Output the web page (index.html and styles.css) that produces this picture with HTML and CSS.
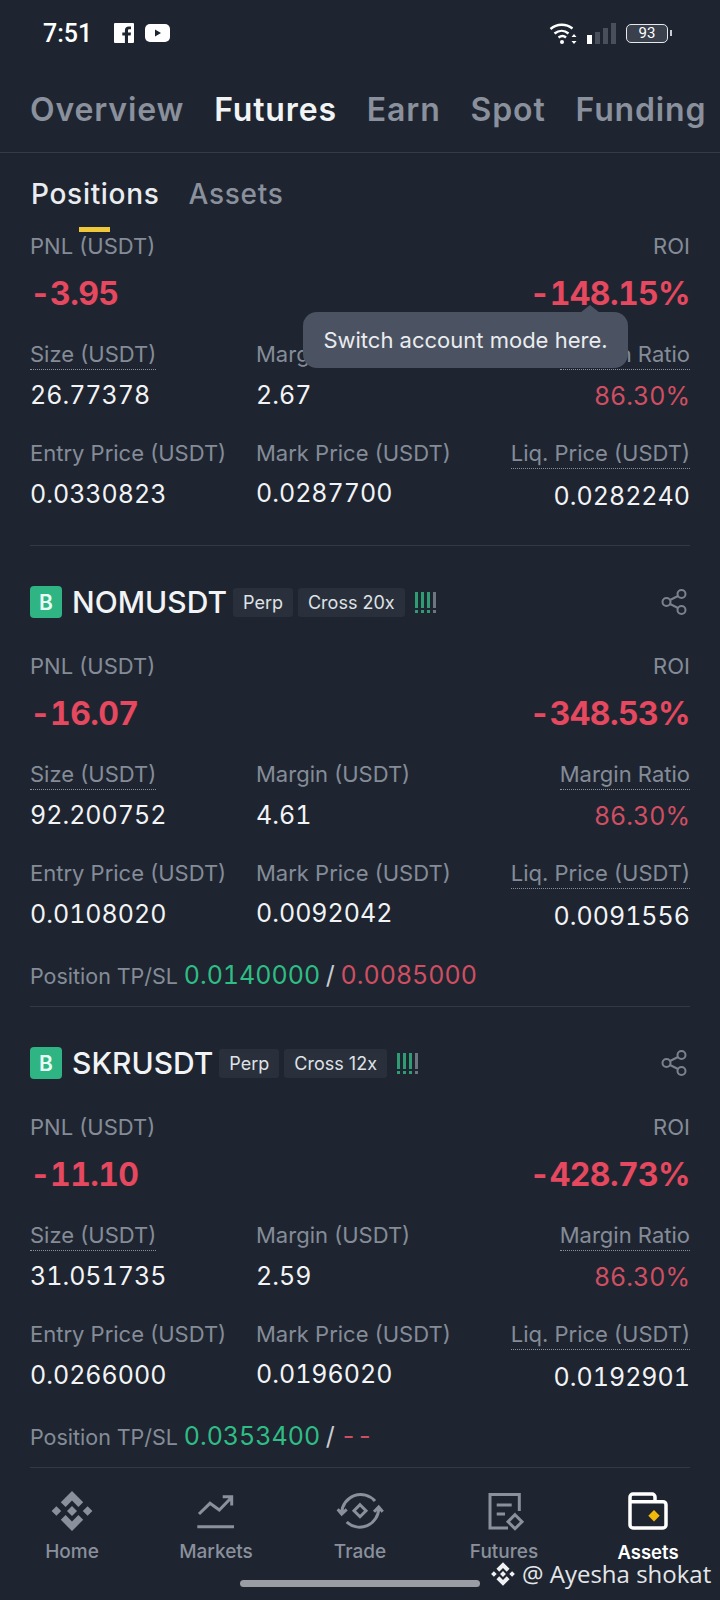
FILE: index.html
```html
<!DOCTYPE html>
<html lang="en">
<head>
  <meta charset="UTF-8">
  <meta name="viewport" content="width=device-width, initial-scale=1.0">
  <title>Assets - Futures</title>
  <link rel="stylesheet" href="styles.css">
</head>
<body>
  <svg class="defs" width="0" height="0">
    <symbol id="bnb" viewBox="0 0 24 24">
      <path d="M12 2l5.600 5.600-2.400 2.400L12 6.800 8.800 10 6.400 7.600zM12 22l5.600-5.600-2.400-2.400-3.200 3.200L8.800 14l-2.400 2.400zM12 9.500l2.500 2.500-2.500 2.500-2.500-2.500zM4.200 9.600L6.600 12l-2.400 2.400L1.800 12zM19.800 9.600l2.400 2.400-2.400 2.400-2.400-2.400z"/>
    </symbol>
    <symbol id="share" viewBox="0 0 26 26">
      <g fill="none" stroke="currentColor" stroke-width="2">
        <circle cx="5.500" cy="13" r="4"/><circle cx="20.500" cy="5" r="4"/><circle cx="20.500" cy="21" r="4"/>
        <path d="M9 11l8-4M9 15l8 4"/>
      </g>
    </symbol>
  </svg>

  <div class="status-bar">
    <span class="clock">7:51</span>
    <svg class="st-fb" viewBox="0 0 20 20"><path fill="#fff" d="M1 0h18a1 1 0 0 1 1 1v18a1 1 0 0 1-1 1h-5v-7.500h2.600l.4-3h-3V7.600c0-.9.300-1.400 1.500-1.400H17V3.500c-.3 0-1.200-.1-2.300-.1-2.300 0-3.800 1.400-3.800 3.900v2.200H8.300v3h2.600V20H1a1 1 0 0 1-1-1V1a1 1 0 0 1 1-1z"/></svg>
    <svg class="st-yt" viewBox="0 0 25 18"><rect width="25" height="18" rx="5" fill="#fff"/><path d="M10 5.500l6 3.500-6 3.500z" fill="#1e2530"/></svg>
    <div class="status-right">
      <svg class="st-wifi" viewBox="0 0 30 24" fill="none" stroke="#fff" stroke-width="2.400">
        <path d="M1.500 8C8 2.500 17 2.500 23.500 7.500M5.500 12.500c4.500-3.500 10-3.500 14 0M9.500 16.500c2.500-1.800 5.500-1.800 7.500 0"/>
        <circle cx="13" cy="21" r="2" fill="#fff" stroke="none"/>
        <path d="M25 13l2.500 3h-5zM25 23l-2.500-3h5z" fill="#fff" stroke="none"/>
      </svg>
      <div class="st-signal"><i class="on"></i><i></i><i></i><i></i></div>
      <div class="st-batt"><span>93</span></div>
    </div>
  </div>

  <nav class="top-tabs">
    <a>Overview</a>
    <a class="active">Futures</a>
    <a>Earn</a>
    <a>Spot</a>
    <a>Funding</a>
  </nav>

  <div class="sub-tabs">
    <a class="active">Positions</a>
    <a>Assets</a>
    <span class="indicator"></span>
  </div>

  <section class="position first">
    <div class="pnl-row">
      <div><div class="lbl">PNL (USDT)</div><div class="big red">-3.95</div></div>
      <div class="right"><div class="lbl">ROI</div><div class="big red">-148.15%</div></div>
    </div>
    <div class="stats">
      <div><div class="lbl dotted">Size (USDT)</div><div class="val">26.77378</div></div>
      <div><div class="lbl">Margin (USDT)</div><div class="val">2.67</div></div>
      <div class="right"><div class="lbl dotted">Margin Ratio</div><div class="val red-soft">86.30%</div></div>
      <div><div class="lbl">Entry Price (USDT)</div><div class="val">0.0330823</div></div>
      <div><div class="lbl">Mark Price (USDT)</div><div class="val mark">0.0287700</div></div>
      <div class="right"><div class="lbl dotted">Liq. Price (USDT)</div><div class="val liq">0.0282240</div></div>
    </div>
  </section>

  <section class="position">
    <div class="head">
      <span class="badge">B</span>
      <span class="symbol">NOMUSDT</span>
      <span class="tag">Perp</span>
      <span class="tag">Cross 20x</span>
      <span class="risk"><i></i><i></i><i></i><i></i></span>
      <svg class="share"><use href="#share"/></svg>
    </div>
    <div class="pnl-row">
      <div><div class="lbl">PNL (USDT)</div><div class="big red">-16.07</div></div>
      <div class="right"><div class="lbl">ROI</div><div class="big red">-348.53%</div></div>
    </div>
    <div class="stats">
      <div><div class="lbl dotted">Size (USDT)</div><div class="val">92.200752</div></div>
      <div><div class="lbl">Margin (USDT)</div><div class="val">4.61</div></div>
      <div class="right"><div class="lbl dotted">Margin Ratio</div><div class="val red-soft">86.30%</div></div>
      <div><div class="lbl">Entry Price (USDT)</div><div class="val">0.0108020</div></div>
      <div><div class="lbl">Mark Price (USDT)</div><div class="val mark">0.0092042</div></div>
      <div class="right"><div class="lbl dotted">Liq. Price (USDT)</div><div class="val liq">0.0091556</div></div>
    </div>
    <div class="tpsl"><span class="lbl">Position TP/SL</span> <span class="green">0.0140000</span> / <span class="red-soft">0.0085000</span></div>
  </section>

  <section class="position">
    <div class="head">
      <span class="badge">B</span>
      <span class="symbol">SKRUSDT</span>
      <span class="tag">Perp</span>
      <span class="tag">Cross 12x</span>
      <span class="risk"><i></i><i></i><i></i><i></i></span>
      <svg class="share"><use href="#share"/></svg>
    </div>
    <div class="pnl-row">
      <div><div class="lbl">PNL (USDT)</div><div class="big red">-11.10</div></div>
      <div class="right"><div class="lbl">ROI</div><div class="big red">-428.73%</div></div>
    </div>
    <div class="stats">
      <div><div class="lbl dotted">Size (USDT)</div><div class="val">31.051735</div></div>
      <div><div class="lbl">Margin (USDT)</div><div class="val">2.59</div></div>
      <div class="right"><div class="lbl dotted">Margin Ratio</div><div class="val red-soft">86.30%</div></div>
      <div><div class="lbl">Entry Price (USDT)</div><div class="val">0.0266000</div></div>
      <div><div class="lbl">Mark Price (USDT)</div><div class="val mark">0.0196020</div></div>
      <div class="right"><div class="lbl dotted">Liq. Price (USDT)</div><div class="val liq">0.0192901</div></div>
    </div>
    <div class="tpsl"><span class="lbl">Position TP/SL</span> <span class="green">0.0353400</span> / <span class="red-soft">--</span></div>
  </section>

  <nav class="bottom-nav">
    <a>
      <svg class="nav-icon fill" viewBox="0 0 24 24"><use href="#bnb"/></svg>
      Home
    </a>
    <a>
      <svg class="nav-icon" viewBox="0 0 48 48"><path d="M7 27l11-10.700L27.300 23 39.700 10.300M30.700 9.700h9V18.500M5.300 39.700H42"/></svg>
      Markets
    </a>
    <a>
      <svg class="nav-icon" viewBox="0 0 48 48"><path d="M5.700 26A19 19 0 0 1 39 14M1.700 22.300l4 4.700 5-4.700M42.700 21A19 19 0 0 1 10.700 35M38 24.700l4.700-4.700 4 4.700M24 17.700l6 6-6 6-6-6z"/></svg>
      Trade
    </a>
    <a>
      <svg class="nav-icon" viewBox="0 0 48 48"><path d="M39.300 24V7.500H10V41h18M16.700 18h15M16.700 27H25M35 27.700l7 7-7 7-7-7z"/></svg>
      Futures
    </a>
    <a class="active">
      <svg class="nav-icon" viewBox="0 0 48 48"><path d="M6 14.700V10a3 3 0 0 1 3-3h19a3 3 0 0 1 3 3v4.700M6 14.700h33a3 3 0 0 1 3 3V38a3 3 0 0 1-3 3H9a3 3 0 0 1-3-3z"/><path class="coin" d="M30 23l5.700 5.700-5.700 5.700-5.700-5.700z"/></svg>
      Assets
    </a>
  </nav>

  <!-- things that sit over the page -->
  <div class="tooltip">Switch account mode here.</div>
  <div class="home-bar"></div>
  <div class="watermark">
    <svg class="wm-logo"><use href="#bnb"/></svg>
    <span>@ Ayesha shokat</span>
  </div>
</body>
</html>
```

FILE: styles.css
```css
* { box-sizing: border-box; }
html, body { margin: 0; padding: 0; }
body {
  position: relative;
  width: 720px;
  height: 1600px;
  overflow: hidden;
  background: #1e2530;
  color: #eaecef;
  font-family: "Inter", "Liberation Sans", sans-serif;
}
.defs { position: absolute; }

/* status bar */
.status-bar {
  display: flex;
  align-items: center;
  height: 66px;
  padding: 0 52px 0 43px;
}
.clock { font-family: "Roboto", sans-serif; font-size: 25px; font-weight: 500; color: #fff; width: 71px; }
.st-fb { width: 20px; height: 20px; margin-right: 11px; }
.st-yt { width: 25px; height: 18px; }
.status-right { margin-left: auto; display: flex; align-items: center; }
.st-wifi { width: 30px; height: 24px; }
.st-signal { display: flex; align-items: flex-end; gap: 3px; height: 21px; margin: 0 10px 0 8px; }
.st-signal i { width: 5px; background: #4a505b; }
.st-signal i:nth-child(1) { height: 9px; }
.st-signal i:nth-child(2) { height: 12px; }
.st-signal i:nth-child(3) { height: 16px; }
.st-signal i:nth-child(4) { height: 21px; }
.st-signal i.on { background: #fff; }
.st-batt {
  position: relative;
  width: 42px;
  height: 19px;
  border: 1.500px solid #e6e8ea;
  border-radius: 5px;
  display: flex;
  align-items: center;
  justify-content: center;
  background: #3a404c;
  font-family: "Roboto", sans-serif;
  font-size: 15px;
  color: #fff;
}
.st-batt::after {
  content: "";
  position: absolute;
  right: -5px;
  top: 5px;
  width: 2px;
  height: 6px;
  background: #c8cbd0;
}

/* tabs */
.top-tabs {
  display: flex;
  gap: 30px;
  align-items: center;
  height: 87px;
  padding: 0 30px;
  border-bottom: 1px solid #363c47;
  font-size: 32px;
  font-weight: 600;
  letter-spacing: .85px;
  color: #8a909c;
  white-space: nowrap;
}
.top-tabs .active { color: #f2f3f5; }
.sub-tabs {
  position: relative;
  display: flex;
  gap: 29px;
  align-items: center;
  height: 81px;
  padding: 0 31px 0;
  font-size: 28px;
  font-weight: 500;
  letter-spacing: .7px;
  color: #8a909c;
}
.sub-tabs .active { color: #eaecef; }
.indicator {
  position: absolute;
  left: 79px;
  top: 74px;
  width: 31px;
  height: 5px;
  background: #f0c93a;
}

/* position block */
.position {
  margin: 0 30px;
  height: 461px;
  padding-top: 28px;
  border-bottom: 1px solid #333944;
}
.position.first { height: 312px; padding-top: 0; }
.head {
  display: flex;
  align-items: center;
  height: 56px;
}
.badge {
  width: 32px;
  height: 32px;
  border-radius: 4px;
  background: #2fb583;
  color: #e8fff5;
  font-size: 21px;
  font-weight: 600;
  display: flex;
  align-items: center;
  justify-content: center;
  margin-right: 10px;
}
.symbol { font-size: 30px; font-weight: 500; color: #f2f3f5; margin-right: 6px; }
.tag {
  background: #2a303b;
  border-radius: 3px;
  height: 29px;
  line-height: 29px;
  padding: 0 10px;
  font-size: 18px;
  color: #dfe2e6;
  margin-right: 5px;
}
.risk { display: flex; gap: 3px; margin-left: 5px; }
.risk i {
  position: relative;
  width: 3px;
  height: 16px;
  margin-bottom: 5px;
  background: #2f9c74;
}
.risk i::after {
  content: "";
  position: absolute;
  left: 0;
  bottom: -5px;
  width: 3px;
  height: 3px;
  background: inherit;
}
.risk i:last-child { background: #6d7581; }
.share { width: 26px; height: 26px; margin-left: auto; margin-right: 3px; color: #7b828e; }

.pnl-row {
  display: flex;
  justify-content: space-between;
  margin-top: 24px;
}
.first .pnl-row { margin-top: 0; }
.lbl { font-size: 22px; line-height: 24px; color: #858c98; white-space: nowrap; }
.big { font-size: 32px; font-weight: 700; line-height: 40px; margin-top: 16px; letter-spacing: -.6px; font-variant-numeric: tabular-nums; }
.right { text-align: right; }

.stats {
  display: grid;
  grid-template-columns: 226px 1fr auto;
  grid-auto-rows: 99px;
  margin-top: 28px;
}
.lbl.dotted { display: inline-block; border-bottom: 1px dotted #8a919c; height: 28px; }
.val { font-size: 25px; line-height: 32px; margin-top: 13px; color: #f2f3f5; font-variant-numeric: tabular-nums; }
.lbl.dotted + .val { margin-top: 9px; }
.lbl.dotted + .val.red-soft { margin-top: 10px; }
.val.mark { margin-top: 12px; }
.lbl.dotted + .val.liq { margin-top: 11px; }

.tpsl { font-size: 25px; line-height: 32px; margin-top: -1px; word-spacing: -1px; color: #c9ccd2; white-space: nowrap; font-variant-numeric: tabular-nums; }
.tpsl .lbl { font-size: 21.500px; word-spacing: 0; }

.red { color: #e5485f; }
.red-soft, .val.red-soft { color: #d04e62; }
.green { color: #2ebd85; }

/* bottom nav */
.bottom-nav {
  display: grid;
  grid-template-columns: repeat(5, 1fr);
  padding-top: 19px;
}
.bottom-nav a {
  display: flex;
  flex-direction: column;
  align-items: center;
  gap: 5px;
  font-size: 19px;
  line-height: 24px;
  font-weight: 500;
  color: #8a909c;
}
.bottom-nav a.active { color: #fff; font-weight: 600; font-size: 18.500px; }
.nav-icon {
  width: 48px;
  height: 48px;
  fill: none;
  stroke: #8a909c;
  stroke-width: 3;
}
.nav-icon.fill { fill: #8a909c; stroke: none; }
.active .nav-icon { stroke: #fff; stroke-width: 3.500; }
.nav-icon .coin { fill: #f0b90b; stroke: none; }

/* overlays */
.tooltip {
  position: absolute;
  left: 303px;
  top: 312px;
  width: 325px;
  height: 56px;
  border-radius: 14px;
  background: #4b5362;
  color: #eaecef;
  font-size: 22px;
  line-height: 56px;
  text-align: center;
}
.tooltip::before {
  content: "";
  position: absolute;
  right: 28px;
  top: -7px;
  border-left: 10px solid transparent;
  border-right: 10px solid transparent;
  border-bottom: 8px solid #4b5362;
}
.home-bar {
  position: absolute;
  left: 240px;
  bottom: 13px;
  width: 240px;
  height: 7px;
  border-radius: 4px;
  background: #9a9da4;
}
.watermark {
  position: absolute;
  left: 489px;
  top: 1560px;
  display: flex;
  align-items: center;
  gap: 5px;
  font-family: "Open Sans", sans-serif;
  font-size: 24px;
  line-height: 26px;
  color: #e4e6ea;
  white-space: nowrap;
}
.wm-logo { width: 28px; height: 28px; fill: #f0f1f3; }
```
